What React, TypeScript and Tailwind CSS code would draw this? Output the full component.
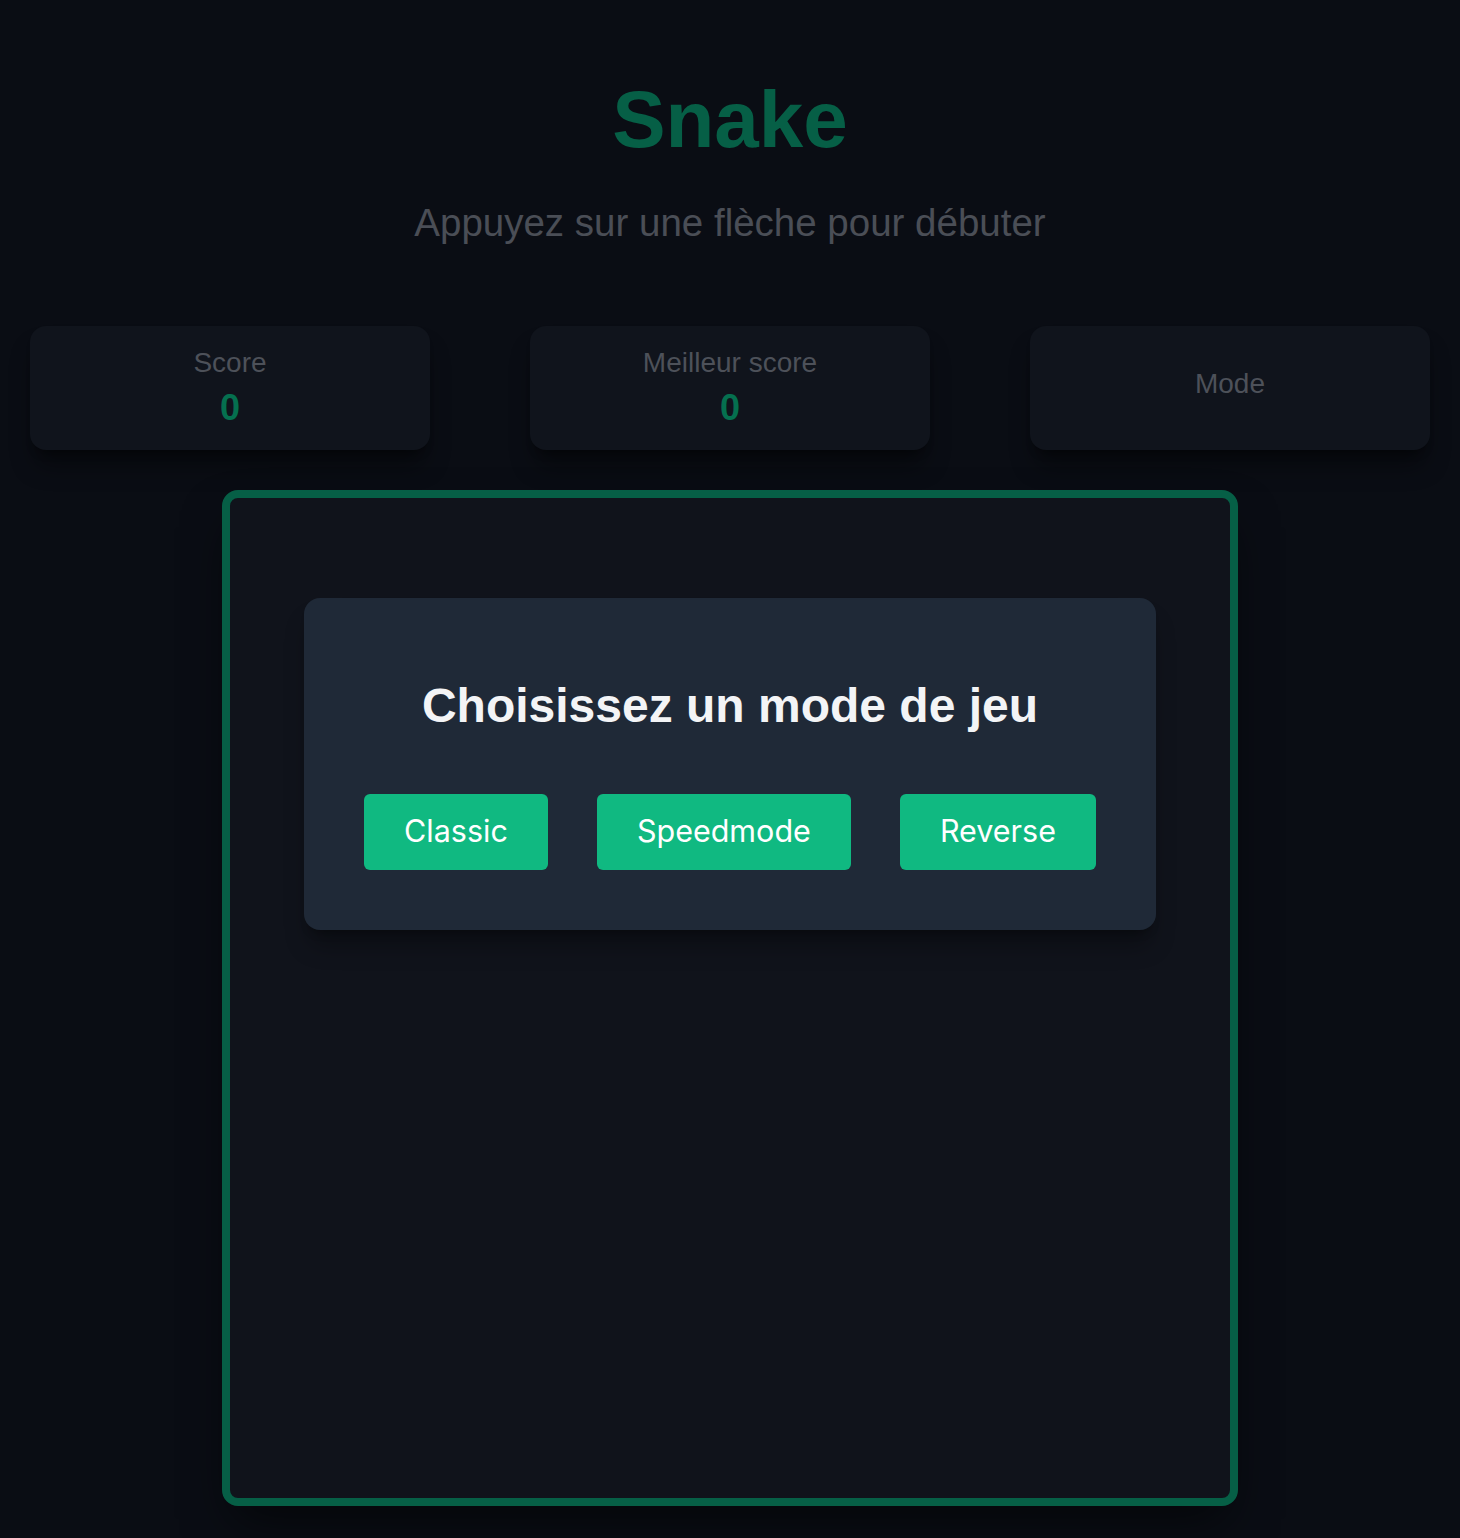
import React from 'react';

// Jeu Snake - écran de sélection du mode
const stats = [
  { label: 'Score', value: '0' },
  { label: 'Meilleur score', value: '0' },
];

const modes = ['Classic', 'Speedmode', 'Reverse'];

function StatCard({ label, value }: { label: string; value?: string }) {
  return (
    <div
      className={`w-[400px] h-[124px] rounded-2xl bg-[#10141c] shadow-xl shadow-black/40 flex flex-col items-center ${
        value ? 'pt-[23px]' : 'pt-[44px]'
      }`}
    >
      <span className="text-[28px] leading-none text-[#4d5159]">{label}</span>
      {value && (
        <span className="mt-[13px] text-[36px] leading-none font-bold text-[#05704f]">{value}</span>
      )}
    </div>
  );
}

export default function App() {
  return (
    <div
      className="min-h-[1538px] w-full bg-[#0a0d14] flex flex-col items-center pt-[80px] pb-[32px]"
      style={{ fontFamily: '"Liberation Sans", Arial, sans-serif' }}
    >
      <h1 className="text-[80px] leading-none font-bold text-[#065f46]">Snake</h1>
      <p className="mt-[44px] text-[38.5px] leading-none text-[#4a4e56]">
        Appuyez sur une flèche pour débuter
      </p>

      {/* Cartes de stats */}
      <div className="mt-[83px] w-full px-[30px] flex justify-between">
        {stats.map((s) => (
          <StatCard key={s.label} label={s.label} value={s.value} />
        ))}
        <StatCard label="Mode" />
      </div>

      {/* Plateau */}
      <div className="mt-[40px] w-[1016px] h-[1016px] rounded-2xl border-[8px] border-[#065f46] bg-[#10131b] shadow-2xl shadow-black/60 px-[74px] pt-[100px]">
        <div className="rounded-2xl bg-[#1f2937] shadow-xl shadow-black/30 px-[60px] pt-[84px] pb-[60px] flex flex-col items-center">
          <h2 className="text-[48px] leading-none font-bold text-[#f3f4f6]">Choisissez un mode de jeu</h2>
          <div className="mt-[64px] w-full flex justify-between">
            {modes.map((m) => (
              <button
                key={m}
                className="h-[76px] px-10 rounded-md bg-[#10b981] text-white text-[30.5px] leading-none"
                style={{ fontFamily: 'Inter, "Noto Sans", sans-serif' }}
              >
                {m}
              </button>
            ))}
          </div>
        </div>
      </div>
    </div>
  );
}
